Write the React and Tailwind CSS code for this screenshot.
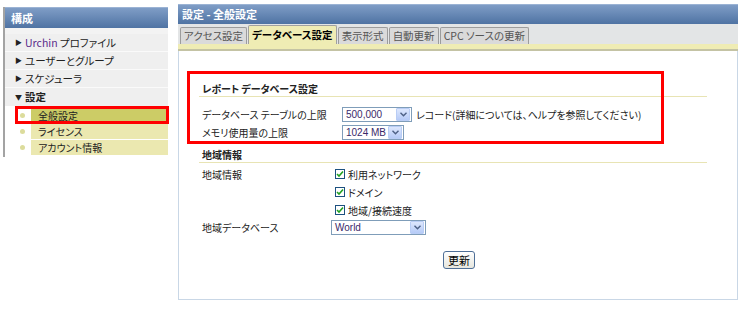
import React from "react";

const font = {
  fontFamily: '"MS UI Gothic", "Noto Sans CJK JP", "Liberation Sans", sans-serif',
};

const SelectBox = ({ value, width }) => (
  <div
    className="flex items-center h-[15px] border border-[#7f9db9] bg-white"
    style={{ width }}
  >
    <span className="flex-1 pl-[3px] text-[10px] leading-[13px] whitespace-nowrap overflow-hidden text-[#3a2a6a] [font-family:'Liberation_Sans',sans-serif]">
      {value}
    </span>
    <span className="w-[14px] h-[13px] mr-px flex items-center justify-center bg-gradient-to-b from-[#dde7fd] to-[#b6cbf7] border border-[#b9cdf5] rounded-[1px]">
      <svg width="7" height="5" viewBox="0 0 7 5">
        <path d="M0.5 0.8 L3.5 3.8 L6.5 0.8" fill="none" stroke="#4d6185" strokeWidth="1.4" />
      </svg>
    </span>
  </div>
);

const Check = ({ label }) => (
  <div className="flex items-center h-[18px] gap-[3px]">
    <span className="w-[10px] h-[10px] border border-[#1c5180] bg-white flex items-center justify-center">
      <svg width="8" height="8" viewBox="0 0 8 8">
        <path d="M1 4 L3 6 L7 1.5" fill="none" stroke="#21a121" strokeWidth="1.6" />
      </svg>
    </span>
    <span>{label}</span>
  </div>
);

const menuItems = [
  { label: "Urchin", rest: " プロファイル" },
  { label: "ユーザーとグループ" },
  { label: "スケジューラ" },
];

const tabs = ["アクセス設定", "データベース設定", "表示形式", "自動更新", "CPC ソースの更新"];

export default function App() {
  return (
    <div
      className="w-[745px] h-[313px] bg-white flex items-start pt-[7px] text-[10px] text-[#222] whitespace-nowrap [font-feature-settings:'palt']"
      style={font}
    >
      {/* Sidebar */}
      <aside className="ml-[3px] w-[165px] border-l-2 border-[#a3a3a3] pb-[1px]">
        <div className="h-[21px] flex items-center pl-[6px] text-white font-bold text-[11px] bg-gradient-to-b from-[#7f9dc6] to-[#4f73a3] border-t border-[#9bb3d4]">
          構成
        </div>
        <div className="h-[6px] bg-[#f3f3f3]" />
        <div className="bg-[#efefef] text-[10.5px]">
          {menuItems.map((item, i) => (
            <div
              key={i}
              className="h-[18px] flex items-center pl-[10px] gap-[3px] border-b border-[#fafafa]"
            >
              <span className="text-[7px] text-[#222]">▶</span>
              <span>
                {item.rest ? (
                  <>
                    <span className="text-[#5a2a8a]">{item.label}</span>
                    {item.rest}
                  </>
                ) : (
                  item.label
                )}
              </span>
            </div>
          ))}
          <div className="h-[18px] flex items-center pl-[10px] gap-[3px] font-bold">
            <span className="text-[7px]">▼</span>
            <span>設定</span>
          </div>
        </div>
        <div className="bg-white pt-[2px]">
          {[
            { label: "全般設定", active: true },
            { label: "ライセンス" },
            { label: "アカウント情報" },
          ].map((s, i) => (
            <div key={i} className="relative flex items-center h-[15px] mb-px">
              <span className="w-[5px] h-[5px] rounded-full bg-[#dcdc9c] ml-[15px] mr-[6px]" />
              <span
                className={`flex-1 h-full flex items-center pl-[7px] ${
                  s.active ? "bg-[#cccc66]" : "bg-[#ebe8b0]"
                }`}
              >
                {s.label}
              </span>
              {s.active && (
                <span className="absolute left-[10px] -right-[1px] -top-[2px] -bottom-[1px] border-[3px] border-[#ff0000]" />
              )}
            </div>
          ))}
        </div>
      </aside>

      {/* Main panel */}
      <main className="ml-[10px] w-[560px] -mt-[3px]">
        <div className="h-[20px] flex items-center pl-[4px] text-white font-bold text-[11px] bg-gradient-to-b from-[#7f9dc6] to-[#4f73a3] border-t border-[#9bb3d4]">
          設定 - 全般設定
        </div>
        <div className="h-[20px] bg-[#e3e5e6] flex items-end pl-[2px] gap-[1px] text-[10.5px]">
          {tabs.map((t, i) => (
            <div
              key={i}
              className={`px-[3px] flex items-center border border-b-0 rounded-t-[2px] ${
                i === 1
                  ? "h-[19px] bg-[#efecb4] border-[#a0a0a0] font-bold text-black"
                  : "h-[17px] bg-[#dadada] border-[#9c9c9c] text-[#555]"
              }`}
            >
              {t}
            </div>
          ))}
        </div>
        <div className="h-[7px] bg-[#efecb4] border-b-2 border-[#c4c3a4]" />

        <div className="relative h-[249px] border-l border-r border-b border-[#c9d7e6] pl-[20px] pt-[30px]">
          {/* Annotation box */}
          <span className="absolute left-[8px] top-[20px] w-[477px] h-[73px] border-[3px] border-[#ff0000]" />

          <div className="w-[508px]">
            <div className="h-[16px] flex items-center pl-[3px] font-bold border-b border-[#e8e4b4]">
              レポート データベース設定
            </div>
            <div className="pt-[9px]">
              <div className="flex items-center h-[17px]">
                <span className="w-[143px] pl-[3px]">データベース テーブルの上限</span>
                <SelectBox value="500,000" width={70} />
                <span className="ml-[4px]">レコード(詳細については、ヘルプを参照してください)</span>
              </div>
              <div className="flex items-center h-[17px] mt-[1px]">
                <span className="w-[143px] pl-[3px]">メモリ使用量の上限</span>
                <SelectBox value="1024 MB" width={62} />
              </div>
            </div>

            <div className="mt-[6px] h-[16px] flex items-center pl-[3px] font-bold border-b border-[#e8e4b4]">
              地域情報
            </div>
            <div className="flex pt-[2px]">
              <span className="w-[136px] pl-[3px] h-[18px] flex items-center">地域情報</span>
              <div>
                <Check label="利用ネットワーク" />
                <Check label="ドメイン" />
                <Check label="地域/接続速度" />
              </div>
            </div>
            <div className="flex items-center h-[17px]">
              <span className="w-[132px] pl-[3px]">地域データベース</span>
              <SelectBox value="World" width={95} />
            </div>
            <div className="pt-[15px] pl-[244px]">
              <button className="h-[18px] px-[4px] border border-[#4f6f97] rounded-[3px] bg-gradient-to-b from-white to-[#e6e6de] text-[11px] text-black leading-none">
                更新
              </button>
            </div>
          </div>
        </div>
      </main>
    </div>
  );
}
